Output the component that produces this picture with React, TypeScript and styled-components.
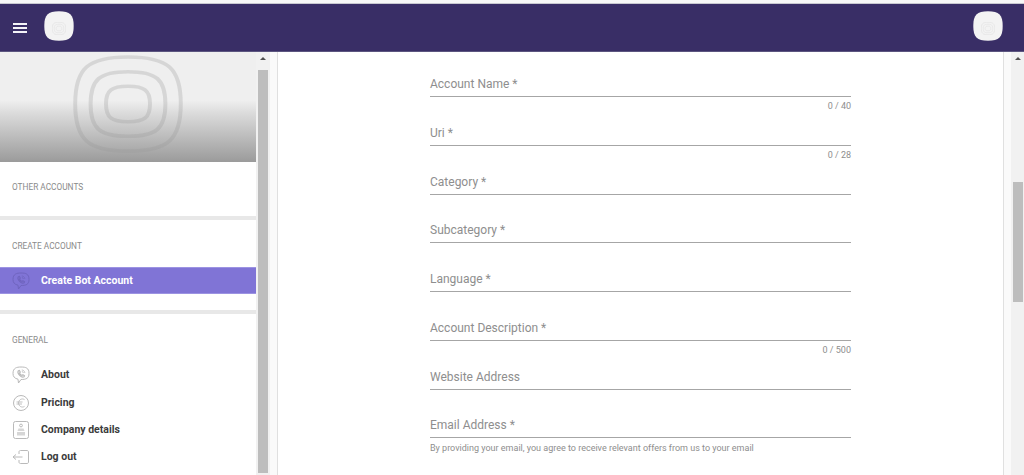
import styled, { createGlobalStyle } from "styled-components";

const GlobalStyle = createGlobalStyle`
    html, body {
        margin: 0;
        padding: 0;
        height: 475px;
        overflow: hidden;
        background: #fafafa;
        font-family: Roboto, "Liberation Sans", sans-serif;
    }
    * {
        box-sizing: border-box;
    }
`;

const Page = styled.div`
    width: 1024px;
    height: 475px;
    display: flex;
    flex-direction: column;
    overflow: hidden;
`;

const TopStrip = styled.div`
    height: 4px;
    flex: none;
    background: #f7f7f7;
    border-bottom: 1px solid #c8c8d0;
`;

const Header = styled.header`
    height: 48px;
    flex: none;
    background: #392e66;
    border-bottom: 1px solid #5c5680;
    display: flex;
    align-items: center;
    justify-content: space-between;
    padding: 0 21px 3px 13px;
`;

const HeaderLeft = styled.div`
    display: flex;
    align-items: center;
    gap: 17px;
`;

const Burger = styled.button`
    width: 14px;
    height: 10px;
    margin-top: 3px;
    padding: 0;
    border: 0;
    background: transparent;
    display: flex;
    flex-direction: column;
    justify-content: space-between;
`;

const BurgerLine = styled.span`
    display: block;
    height: 2px;
    background: #f4f3f8;
`;

const Avatar = styled.div`
    width: 30px;
    height: 30px;
    color: #f3f3f3;
    position: relative;
    display: flex;
    align-items: center;
    justify-content: center;
`;

const AvatarMark = styled.div`
    position: absolute;
    width: 14px;
    height: 13px;
    color: #dedede;
`;

const Body = styled.div`
    flex: 1;
    min-height: 0;
    display: flex;
`;

const Sidebar = styled.aside`
    width: 256px;
    flex: none;
    background: #fff;
    overflow: hidden;
`;

const Hero = styled.div`
    height: 110px;
    padding-top: 3px;
    background: linear-gradient(#efefef 0, #efefef 44%, #dcdcdc 55%, #9b9b9b 100%);
    display: flex;
    align-items: flex-start;
    justify-content: center;
`;

const HeroMark = styled.div`
    width: 110px;
    height: 98px;
    color: rgba(150, 150, 150, 0.28);
`;

const Section = styled.section<{ $height: number; $divider?: boolean }>`
    height: ${({ $height }) => $height}px;
    border-bottom: ${({ $divider }) => ($divider ? "4px solid #e8e8e8" : "0")};
`;

const SectionTitle = styled.div<{ $top: number }>`
    padding: ${({ $top }) => $top}px 0 0 12px;
    font-size: 8.3px;
    line-height: 12px;
    color: #8a8a8a;
    text-transform: uppercase;
`;

const ActiveRow = styled.div`
    height: 27px;
    margin-top: 15px;
    background: #8074d6;
    border-top: 1px solid #9c93e2;
    border-bottom: 1px solid #9c93e2;
    color: #fff;
    display: flex;
    align-items: center;
    font-size: 10.5px;
    font-weight: 700;
`;

const NavList = styled.div`
    margin-top: 14px;
    display: flex;
    flex-direction: column;
`;

const NavRow = styled.div<{ $height: number }>`
    height: ${({ $height }) => $height}px;
    display: flex;
    align-items: center;
    font-size: 10.5px;
    font-weight: 700;
    color: #3b3b3b;
`;

const IconSlot = styled.span<{ $muted?: boolean }>`
    width: 41px;
    flex: none;
    padding-left: 12px;
    display: flex;
    align-items: center;
    color: ${({ $muted }) => ($muted ? "#6f64bf" : "#bababa")};
`;

const Track = styled.div<{ $width: number }>`
    width: ${({ $width }) => $width}px;
    flex: none;
    background: #f1f1f1;
    display: flex;
    flex-direction: column;
    align-items: center;
`;

const ArrowUp = styled.span`
    width: 0;
    height: 0;
    margin-top: 5px;
    border-left: 3px solid transparent;
    border-right: 3px solid transparent;
    border-bottom: 3px solid #505050;
`;

const Thumb = styled.div<{ $top: number; $height: number }>`
    width: 10px;
    height: ${({ $height }) => $height}px;
    margin-top: ${({ $top }) => $top}px;
    background: #bdbdbd;
`;

const Gutter = styled.div`
    width: 7px;
    flex: none;
    background: #fafafa;
`;

const Main = styled.main`
    width: 727px;
    flex: none;
    background: #fff;
    border-left: 1px solid #e0e0e0;
    border-right: 1px solid #e0e0e0;
    padding: 20px 0 0 152px;
`;

const Form = styled.form`
    width: 421px;
    display: flex;
    flex-direction: column;
`;

const Field = styled.div`
    height: 48.75px;
`;

const Control = styled.div`
    height: 25px;
    border-bottom: 1px solid #a6a6a6;
    font-size: 12px;
    line-height: 24px;
    color: #8e8e8e;
`;

const Counter = styled.div`
    margin-top: 3px;
    text-align: right;
    font-size: 9px;
    line-height: 12px;
    color: #8e8e8e;
`;

const Help = styled.div`
    margin-top: 4px;
    font-size: 9px;
    line-height: 12px;
    color: #8e8e8e;
`;

const Squircle = ({ x, y }: { x: number; y: number }) => {
  const r = 100 - x;
  const b = 100 - y;
  const cx = (r - x) * 0.12;
  const cy = (b - y) * 0.12;
  return (
    <path
      d={`M50 ${y}C${r - cx} ${y} ${r} ${y + cy} ${r} 50C${r} ${b - cy} ${r - cx} ${b} 50 ${b}C${x + cx} ${b} ${x} ${b - cy} ${x} 50C${x} ${y + cy} ${x + cx} ${y} 50 ${y}Z`}
    />
  );
};

const RingsMark = () => (
  <svg width="100%" height="100%" viewBox="0 0 100 100" preserveAspectRatio="none" fill="none" stroke="currentColor" strokeWidth="3.6">
    <Squircle x={2} y={2} />
    <Squircle x={16} y={17} />
    <Squircle x={30} y={32} />
  </svg>
);

const AppBadge = () => (
  <Avatar>
    <svg width="30" height="30" viewBox="0 0 100 100" fill="currentColor">
      <Squircle x={1} y={1} />
    </svg>
    <AvatarMark>
      <RingsMark />
    </AvatarMark>
  </Avatar>
);

const ViberIcon = () => (
  <svg width="18" height="18" viewBox="0 0 18 18" fill="none" stroke="currentColor" strokeWidth="1">
    <path d="M9 1C14 1 17 2 17 7.500C17 12.500 14 13.500 9 13.500L6.500 17L6 13.200C2.500 12.500 1 10.500 1 7.500C1 2 4.500 1 9 1Z" />
    <path
      d="M6.300 4.800L7.400 4.500L8.300 6.200L7.500 7C7.900 8.200 8.800 9.100 10 9.600L10.900 8.700L12.500 9.700L12.100 10.800C11 11.500 9 10.800 7.600 9.400C6.200 8 5.600 5.900 6.300 4.800Z"
      strokeWidth="1.100"
    />
    <path d="M9.800 3.900C11.500 4.100 12.700 5.300 12.900 7M9.800 5.400C10.700 5.500 11.300 6.100 11.400 7" strokeWidth=".8" />
  </svg>
);

const EuroIcon = () => (
  <svg width="18" height="18" viewBox="0 0 18 18" fill="none" stroke="currentColor" strokeWidth="1">
    <circle cx="9" cy="9" r="7.500" />
    <path d="M12.500 5.600C10 4 6.800 5.500 6.500 9C6.800 12.500 10 14 12.500 12.400M4.500 8H10.500M4.500 10H10" strokeWidth=".9" />
  </svg>
);

const CompanyIcon = () => (
  <svg width="18" height="20" viewBox="0 0 18 20" fill="none" stroke="currentColor" strokeWidth="1">
    <rect x="1.500" y="1.500" width="15" height="17" rx="2" />
    <circle cx="9" cy="5.500" r="1.400" />
    <path d="M6.500 8.500H11.500L12.500 11H5.500Z" fill="currentColor" stroke="none" opacity=".6" />
    <rect x="5" y="12" width="8" height="3.500" fill="currentColor" stroke="none" opacity=".6" />
  </svg>
);

const LogoutIcon = () => (
  <svg width="18" height="18" viewBox="0 0 18 18" fill="none" stroke="currentColor" strokeWidth="1">
    <path d="M7 6V4C7 2.900 7.700 2.500 8.500 2.500H15C15.800 2.500 16.500 3 16.500 4V14C16.500 15 15.800 15.500 15 15.500H8.500C7.700 15.500 7 15 7 14V12" />
    <path d="M10.500 9H1M1 9L4 6.500M1 9L4 11.500" />
  </svg>
);

const fields = [
  { label: "Account Name *", counter: "0 / 40" },
  { label: "Uri *", counter: "0 / 28" },
  { label: "Category *" },
  { label: "Subcategory *" },
  { label: "Language *" },
  { label: "Account Description *", counter: "0 / 500" },
  { label: "Website Address" },
  {
    label: "Email Address *",
    help: "By providing your email, you agree to receive relevant offers from us to your email",
  },
];

const navItems = [
  { label: "About", icon: <ViberIcon />, height: 29 },
  { label: "Pricing", icon: <EuroIcon />, height: 27 },
  { label: "Company details", icon: <CompanyIcon />, height: 27 },
  { label: "Log out", icon: <LogoutIcon />, height: 27 },
];

export default function App() {
  return (
    <>
      <GlobalStyle />
      <Page>
        <TopStrip />
        <Header>
          <HeaderLeft>
            <Burger aria-label="menu">
              <BurgerLine />
              <BurgerLine />
              <BurgerLine />
            </Burger>
            <AppBadge />
          </HeaderLeft>
          <AppBadge />
        </Header>
        <Body>
          <Sidebar>
            <Hero>
              <HeroMark>
                <RingsMark />
              </HeroMark>
            </Hero>
            <Section $height={58} $divider>
              <SectionTitle $top={19}>Other accounts</SectionTitle>
            </Section>
            <Section $height={94} $divider>
              <SectionTitle $top={20}>Create account</SectionTitle>
              <ActiveRow>
                <IconSlot $muted>
                  <ViberIcon />
                </IconSlot>
                Create Bot Account
              </ActiveRow>
            </Section>
            <Section $height={161}>
              <SectionTitle $top={20}>General</SectionTitle>
              <NavList>
                {navItems.map((item) => (
                  <NavRow key={item.label} $height={item.height}>
                    <IconSlot>{item.icon}</IconSlot>
                    {item.label}
                  </NavRow>
                ))}
              </NavList>
            </Section>
          </Sidebar>
          <Track $width={14}>
            <ArrowUp />
            <Thumb $top={10} $height={403} />
          </Track>
          <Gutter />
          <Main>
            <Form>
              {fields.map((field) => (
                <Field key={field.label}>
                  <Control>{field.label}</Control>
                  {field.counter && <Counter>{field.counter}</Counter>}
                  {field.help && <Help>{field.help}</Help>}
                </Field>
              ))}
            </Form>
          </Main>
          <Gutter />
          <Track $width={13}>
            <ArrowUp />
            <Thumb $top={122} $height={120} />
          </Track>
        </Body>
      </Page>
    </>
  );
}
